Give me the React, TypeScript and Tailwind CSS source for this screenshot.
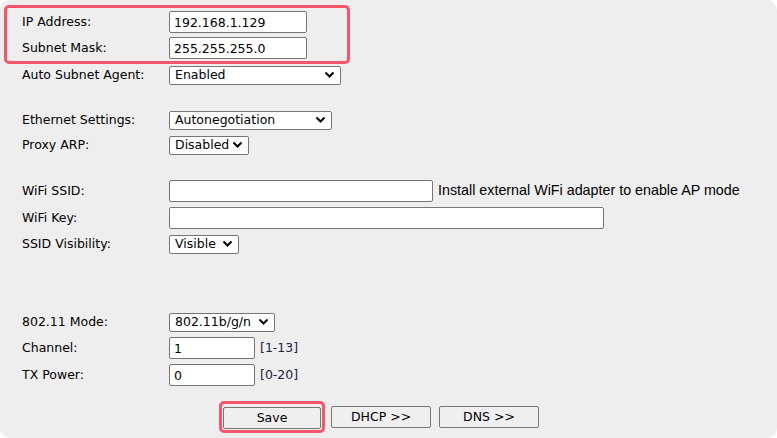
import React from "react";

const FONT = "font-['DejaVu_Sans','Verdana',sans-serif]";

function Chevron() {
  return (
    <svg width="11" height="8" viewBox="0 0 11 8" className="shrink-0">
      <polyline
        points="1.5,1.5 5.5,5.5 9.5,1.5"
        fill="none"
        stroke="#000"
        strokeWidth="2"
      />
    </svg>
  );
}

function TextBox({ value = "", width }: { value?: string; width: string }) {
  return (
    <input
      readOnly
      value={value}
      className={`${width} h-[22px] bg-white border border-[#767676] rounded-[2px] px-[4px] text-[12.5px] text-black outline-none`}
    />
  );
}

function Select({ value, width }: { value: string; width: string }) {
  return (
    <div
      className={`${width} h-[19px] bg-white border border-[#767676] rounded-[2px] pl-[5px] pr-[5px] flex items-center justify-between text-[12.5px] text-black`}
    >
      <span className="leading-none">{value}</span>
      <Chevron />
    </div>
  );
}

function Row({
  label,
  height,
  children,
  className = "",
}: {
  label: string;
  height: string;
  children: React.ReactNode;
  className?: string;
}) {
  return (
    <div className={`flex items-center ${height} ${className}`}>
      <div className="w-[147px] shrink-0 text-[12.5px] text-black">{label}</div>
      {children}
    </div>
  );
}

export default function App() {
  return (
    <div className={`w-[777px] h-[438px] bg-white ${FONT}`}>
      <div className="w-full h-full bg-[#eeeeee] rounded-[10px] pt-[5px] flex flex-col">
        {/* highlighted address block */}
        <div className="ml-[4px] w-[346px] border-[3px] border-[#f5566a] rounded-[5px] pl-[15px] pt-[1px]">
          <Row label="IP Address:" height="h-[26px]">
            <TextBox value="192.168.1.129" width="w-[138px]" />
          </Row>
          <Row label="Subnet Mask:" height="h-[26px]">
            <TextBox value="255.255.255.0" width="w-[138px]" />
          </Row>
        </div>

        <div className="pl-[22px] flex flex-col">
          <Row label="Auto Subnet Agent:" height="h-[22px]">
            <Select value="Enabled" width="w-[172px]" />
          </Row>

          <Row label="Ethernet Settings:" height="h-[24px]" className="mt-[22px]">
            <Select value="Autonegotiation" width="w-[163px]" />
          </Row>
          <Row label="Proxy ARP:" height="h-[26px]">
            <Select value="Disabled" width="w-[80px]" />
          </Row>

          <Row label="WiFi SSID:" height="h-[26px]" className="mt-[20px]">
            <TextBox width="w-[264px]" />
            <span className="ml-[5px] text-[14.3px] text-black font-['Liberation_Sans',Arial,sans-serif]">
              Install external WiFi adapter to enable AP mode
            </span>
          </Row>
          <Row label="WiFi Key:" height="h-[28px]">
            <TextBox width="w-[435px]" />
          </Row>
          <Row label="SSID Visibility:" height="h-[24px]">
            <Select value="Visible" width="w-[70px]" />
          </Row>

          <Row label="802.11 Mode:" height="h-[24px]" className="mt-[54px]">
            <Select value="802.11b/g/n" width="w-[106px]" />
          </Row>
          <Row label="Channel:" height="h-[28px]">
            <TextBox value="1" width="w-[86px]" />
            <span className="ml-[5px] text-[12.5px] text-[#1a2340]">[1-13]</span>
          </Row>
          <Row label="TX Power:" height="h-[26px]">
            <TextBox value="0" width="w-[86px]" />
            <span className="ml-[5px] text-[12.5px] text-[#1a2340]">[0-20]</span>
          </Row>
        </div>

        <div className="mt-[17px] pl-[223px] flex items-center">
          <div className="relative">
            <button className="w-[98px] h-[22px] bg-[#efefef] border border-[#767676] rounded-[2px] text-[12.5px] text-black">
              Save
            </button>
            <span className="absolute -inset-[4px] border-[3px] border-[#f5566a] rounded-[5px] pointer-events-none" />
          </div>
          <button className="ml-[10px] w-[100px] h-[22px] bg-[#efefef] border border-[#767676] rounded-[2px] text-[12.5px] text-black">
            DHCP &gt;&gt;
          </button>
          <button className="ml-[8px] w-[100px] h-[22px] bg-[#efefef] border border-[#767676] rounded-[2px] text-[12.5px] text-black">
            DNS &gt;&gt;
          </button>
        </div>
      </div>
    </div>
  );
}
